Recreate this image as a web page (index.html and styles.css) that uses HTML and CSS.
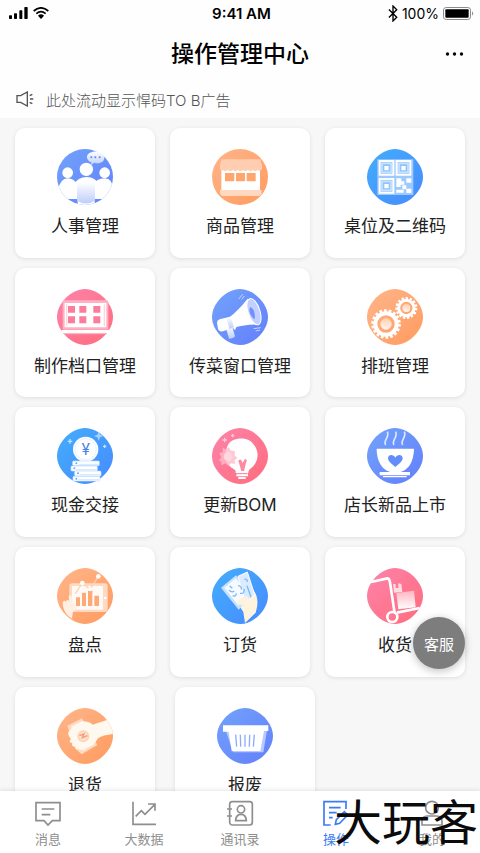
FILE: index.html
```html
<!DOCTYPE html>
<html lang="zh-CN">
<head>
<meta charset="utf-8">
<meta name="viewport" content="width=device-width, initial-scale=1">
<title>操作管理中心</title>
<link rel="stylesheet" href="styles.css">
</head>
<body>
<svg class="defs" aria-hidden="true">
  <defs>
    <linearGradient id="indigo" x1="0" y1="0" x2="1" y2="1"><stop offset="0" stop-color="#72a3fb"/><stop offset="1" stop-color="#637ffc"/></linearGradient>
    <linearGradient id="orange" x1="0" y1="0" x2="1" y2="1"><stop offset="0" stop-color="#ffb58a"/><stop offset="1" stop-color="#ff9b5f"/></linearGradient>
    <linearGradient id="blue" x1="0" y1="0" x2="1" y2="1"><stop offset="0" stop-color="#43adfb"/><stop offset="1" stop-color="#478bff"/></linearGradient>
    <linearGradient id="pink" x1="0" y1="0" x2="1" y2="1"><stop offset="0" stop-color="#fd83ab"/><stop offset="1" stop-color="#ff6c7c"/></linearGradient>
    <linearGradient id="fadeBlue" x1="0" y1="0" x2="0" y2="1"><stop offset="0" stop-color="#fff"/><stop offset="1" stop-color="#bccdfc"/></linearGradient>
    <linearGradient id="fadePink" x1="0" y1="0" x2="0" y2="1"><stop offset="0" stop-color="#ffb5c2"/><stop offset="1" stop-color="#fff"/></linearGradient>
    <linearGradient id="fadeOrange" x1="0" y1="0" x2="0" y2="1"><stop offset="0" stop-color="#ffd0b2"/><stop offset="1" stop-color="#fff5ee"/></linearGradient>
    <path id="blob" d="M84 0C125 0 168 43 168 84S125 168 84 168 0 125 0 84 43 0 84 0Z"/>
    <clipPath id="clip"><use href="#blob"/></clipPath>
    <clipPath id="round"><circle cx="84" cy="84" r="84"/></clipPath>
  </defs>
</svg>

<header class="top">
  <div class="status">
    <div class="status-left">
      <svg class="signal" viewBox="0 0 57 36" aria-hidden="true"><rect x="0" y="25" width="9" height="11" rx="2"/><rect x="15" y="19" width="9" height="17" rx="2"/><rect x="31" y="10" width="9" height="26" rx="2"/><rect x="46" y="0" width="10" height="36" rx="2"/></svg>
      <svg class="wifi" viewBox="0 0 48 36" aria-hidden="true"><path d="M2 12Q24-7 46 12M10 20Q24 8 38 20" fill="none" stroke="#000" stroke-width="5"/><path d="M15 26Q24 18 33 26L24 36Z"/></svg>
    </div>
    <span class="time">9:41 AM</span>
    <div class="status-right">
      <svg class="bluetooth" viewBox="0 0 28 50" aria-hidden="true"><path d="M2 13L25 36 14 47V3L25 14 2 37" fill="none" stroke="#000" stroke-width="4"/></svg>
      <span>100%</span>
      <svg class="battery" viewBox="0 0 93 39" aria-hidden="true"><rect x="1.500" y="1.500" width="81" height="36" rx="8" fill="none" stroke="#8b8b8b" stroke-width="3"/><rect x="7" y="7" width="70" height="25" rx="3"/><path d="M87 13Q94 19 87 26Z" fill="#8b8b8b"/></svg>
    </div>
  </div>
  <div class="title-bar">
    <h1>操作管理中心</h1>
    <button class="more" type="button" aria-label="更多"><svg viewBox="0 0 54 12" aria-hidden="true"><circle cx="6" cy="6" r="5"/><circle cx="27" cy="6" r="5"/><circle cx="48" cy="6" r="5"/></svg></button>
  </div>
  <div class="notice">
    <svg viewBox="0 0 54 48" aria-hidden="true"><path d="M3 14H14L34 3V45L14 34H3ZM41 14L49 10M42 24H52M41 34L49 38" fill="none" stroke="#555" stroke-width="4"/></svg>
    <span>此处流动显示悍码TO B广告</span>
  </div>
</header>

<main class="content">
  <div class="grid">
    <a class="card" href="#"><svg viewBox="0 0 168 168" aria-hidden="true"><circle cx="84" cy="84" r="84" fill="url(#indigo)"/><g clip-path="url(#round)"><path d="M3 122Q11 88 32 88T60 108L66 150H28ZM108 108Q118 88 143 88T167 122L138 150H110Z" fill="#fff"/><circle cx="32" cy="71" r="16" fill="#fff"/><circle cx="143" cy="71" r="16" fill="#fff"/><path d="M50 108Q62 84 89 84T126 108L113 152V168H62V130Z" fill="#fff"/><path d="M60 100H114V155Q88 172 60 155Z" fill="url(#fadeBlue)"/><circle cx="88" cy="61" r="20" fill="#fff"/></g><path d="M90 26C87 2 142 0 142 26 142 42 122 45 112 41L102 49 103 40Q92 36 90 26Z" fill="url(#fadeBlue)"/><g fill="#5c8af5"><circle cx="103" cy="25" r="3"/><circle cx="115" cy="25" r="3"/><circle cx="128" cy="25" r="3"/></g></svg><span>人事管理</span></a>

    <a class="card" href="#"><svg viewBox="0 0 168 168" aria-hidden="true"><circle cx="84" cy="84" r="84" fill="url(#orange)"/><path d="M28 58H144V128H28Z" fill="#fff"/><path d="M29 31H145L150 50V60Q144 69 137 63 130 70 123 63 115 70 108 63 100 70 93 63 85 70 78 63 70 70 63 63 55 70 48 63 40 70 33 63 24 66 24 57V48Z" fill="#ffceb0"/><path d="M39 72H67V97H39ZM72 72H99V97H72ZM104 72H131V97H104Z" fill="#ffa66f"/><path d="M24 123H149V135L142 141H30L24 135Z" fill="#ffd8bf"/></svg><span>商品管理</span></a>

    <a class="card" href="#"><svg viewBox="0 0 168 168" aria-hidden="true"><use href="#blob" fill="url(#blue)"/><path d="M31 31H139V138H31Z" fill="#9bcafe"/><g fill="#8fc3fb" stroke="#fff" stroke-width="6"><path d="M38 36H79V77H38ZM89 36H130V77H89ZM38 90H79V131H38Z"/></g><path d="M45 43H72V70H45ZM96 43H123V70H96ZM45 97H72V124H45Z" fill="none" stroke="#c9e3ff" stroke-width="5"/><path d="M52 51H65V64H52ZM103 51H116V64H103ZM52 105H65V118H52ZM88 88H103V97H112V107H101V114H88ZM118 88H133V101H118ZM106 109H118V119H133V132H118V121H106ZM88 122H110V131H88Z" fill="#fff"/></svg><span>桌位及二维码</span></a>

    <a class="card" href="#"><svg viewBox="0 0 168 168" aria-hidden="true"><use href="#blob" fill="url(#pink)"/><path d="M17 38Q17 34 22 34H149Q154 34 154 39V122H17Z" fill="#ffb1c3"/><path d="M23 42H148V115H23Z" fill="#fff"/><path d="M29 46V112M142 46V112" stroke="#ffd5de" stroke-width="4"/><g fill="#fa7d9c"><path d="M33 51H54V71H33ZM67 51H88V71H67ZM109 51H130V71H109ZM33 82H54V103H33ZM67 82H88V103H67ZM109 82H130V103H109Z"/></g><path d="M14 123H156V132H14Z" fill="#fff"/><path d="M20 132H150V136H20Z" fill="#ffb1c3"/></svg><span>制作档口管理</span></a>

    <a class="card" href="#"><svg viewBox="0 0 168 168" aria-hidden="true"><use href="#blob" fill="url(#indigo)"/><path d="M42 117L60 110 69 142Q64 150 51 149Z" fill="url(#fadeBlue)"/><path d="M15 101Q15 94 23 91L54 83Q77 66 107 29L144 106Q92 107 73 114L69 124 62 116 33 127Q21 129 18 119Z" fill="#fff"/><path d="M44 87L56 83 66 115 52 120Z" fill="url(#fadeBlue)"/><ellipse cx="126" cy="68" rx="18" ry="41" transform="rotate(-18 126 68)" fill="#c1d0ff" stroke="#fff" stroke-width="3"/><path d="M114 54Q129 57 129 91 116 83 112 65Z" fill="#6f91fc"/><path d="M80 30L92 16M89 31L97 21M125 119L146 116M131 126L144 123" stroke="#c6d5ff" stroke-width="3"/></svg><span>传菜窗口管理</span></a>

    <a class="card" href="#"><svg viewBox="0 0 168 168" aria-hidden="true"><use href="#blob" fill="url(#orange)"/><g fill="none" stroke="#fff"><circle cx="57" cy="105" r="32" stroke-width="12"/><circle cx="57" cy="105" r="40" stroke-width="9" stroke-dasharray="8 5.960"/><circle cx="118" cy="57" r="23" stroke-width="9"/><circle cx="118" cy="57" r="29" stroke-width="8" stroke-dasharray="7 5.150"/></g><circle cx="57" cy="105" r="17" fill="url(#fadeOrange)"/><circle cx="118" cy="57" r="12" fill="url(#fadeOrange)"/></svg><span>排班管理</span></a>

    <a class="card" href="#"><svg viewBox="0 0 168 168" aria-hidden="true"><use href="#blob" fill="url(#blue)"/><circle cx="86" cy="64" r="38" fill="#fff"/><circle cx="86" cy="64" r="32" fill="none" stroke="#e5f0ff" stroke-width="3"/><text x="86" y="82" class="coin">¥</text><g fill="#fff" stroke="#c4defd" stroke-width="2"><rect x="47" y="99" width="80" height="14" rx="3"/><rect x="42" y="114" width="79" height="15" rx="3"/><rect x="53" y="129" width="79" height="15" rx="3"/><rect x="48" y="145" width="81" height="14" rx="3"/></g><path d="M65 109H126M58 125H119M68 140H130M64 155H127" stroke="#d3e7ff" stroke-width="3"/><g fill="#68aafa"><circle cx="58" cy="106" r="3"/><circle cx="52" cy="121" r="3"/><circle cx="63" cy="136" r="3"/><circle cx="58" cy="152" r="3"/></g><path d="M126 10L129 20 139 24 129 28 125 38 121 28 111 24 121 20Z" fill="#a7d2ff"/><path d="M39 33V47M32 40H46M143 50V60M138 55H148" stroke="#c4e2ff" stroke-width="4"/></svg><span>现金交接</span></a>

    <a class="card" href="#"><svg viewBox="0 0 168 168" aria-hidden="true"><use href="#blob" fill="url(#pink)"/><path d="M49 49C62 28 107 24 124 48 145 72 139 107 113 124Q106 133 105 142H77Q76 130 64 122C40 110 34 76 49 49Z" fill="#fff"/><path d="M32 59L42 64 50 58 57 68 69 69 68 82 76 90 68 97 69 108 57 106 49 114 40 106 29 112 27 100 20 98 28 87 21 75 32 73Z" fill="#ffbaca" opacity=".8"/><circle cx="48" cy="86" r="13" fill="#ffd7df"/><path d="M88 130L81 104Q75 94 87 95L92 105 98 94Q108 93 102 104L96 130Z" fill="#fd8aa0"/><path d="M71 132H109M73 142H108M79 150H101" stroke="#fff" stroke-width="6"/><path d="M76 137H105" stroke="#fd7995" stroke-width="3"/><path d="M38 29V43M31 36H45M62 18V28M57 23H67" stroke="#ffc8d8" stroke-width="4"/></svg><span>更新BOM</span></a>

    <a class="card" href="#"><svg viewBox="0 0 168 168" aria-hidden="true"><use href="#blob" fill="url(#indigo)"/><path d="M29 62H141C140 107 119 134 85 134S29 106 29 62Z" fill="#fff"/><path d="M85 117C79 112 63 101 63 91 63 79 79 77 85 89 91 77 107 79 107 91 107 101 91 112 85 117Z" fill="#638dfc"/><path d="M38 132H129V142H38ZM48 144H119V148H48Z" fill="#fff"/><path d="M56 51C47 38 69 28 61 11M81 51C72 38 94 28 86 11M107 51C98 38 120 28 112 11" fill="none" stroke="#dce7ff" stroke-width="5"/></svg><span>店长新品上市</span></a>

    <a class="card" href="#"><svg viewBox="0 0 168 168" aria-hidden="true"><use href="#blob" fill="url(#orange)"/><rect x="37" y="46" width="115" height="86" rx="8" fill="#ffdac2"/><rect x="45" y="54" width="93" height="71" fill="#fffaf6"/><circle cx="145" cy="90" r="4" fill="#fff"/><path d="M57 88H69V114H57ZM75 74H87V114H75ZM93 67H106V114H93ZM112 83H126V114H112Z" fill="#ffaa76"/><path d="M55 77L76 45 99 64 124 25" fill="none" stroke="#ffd0b0" stroke-width="4"/><g fill="#fff"><circle cx="76" cy="45" r="7"/><circle cx="99" cy="64" r="6"/><circle cx="124" cy="25" r="7"/></g><g clip-path="url(#clip)"><path d="M48 153C32 146 18 129 17 104Q20 93 27 102L29 96Q36 94 37 103L35 85Q41 77 45 89L48 107 58 113Q65 124 48 130L45 150Z" fill="#fff0e3"/></g></svg><span>盘点</span></a>

    <a class="card" href="#"><svg viewBox="0 0 168 168" aria-hidden="true"><use href="#blob" fill="url(#blue)"/><g clip-path="url(#clip)"><path d="M76 104L94 98 99 44Q111 42 123 65 145 91 131 134L99 165 94 132Z" fill="#fff3de"/><path d="M27 59L72 22 121 80 80 125Z" fill="#c6e2ff"/><path d="M37 59L71 31 111 79 79 112Z" fill="#f6fbff"/><path d="M78 25L106 12 128 80 101 104Z" fill="#d9ebff" stroke="#fff" stroke-width="3"/><g fill="none" stroke="#7fb6f7" stroke-width="4"><path d="M53 54L61 61M51 67Q60 75 67 69M62 83Q73 87 73 76M78 53Q90 54 88 65M84 76Q99 78 96 63M97 34Q106 31 106 42M105 53L117 88"/></g><path d="M79 109Q70 100 81 94L105 83 111 96 92 112Z" fill="#fff3de"/></g></svg><span>订货</span></a>

    <a class="card" href="#"><svg viewBox="0 0 168 168" aria-hidden="true"><use href="#blob" fill="url(#pink)"/><path d="M78 47L86 49V60H94V46L103 48 106 72 81 74Z" fill="#ffdbe2"/><path d="M88 75L141 68 146 118 94 124Z" fill="url(#fadePink)"/><path d="M12 42L61 31Q67 31 69 43L83 136M90 134L158 120" fill="none" stroke="#fff" stroke-width="8"/><circle cx="76" cy="147" r="15" fill="#ff7790" stroke="#fff" stroke-width="8"/></svg><span>收货</span></a>
  </div>

  <div class="last-row">
    <a class="card" href="#"><svg viewBox="0 0 168 168" aria-hidden="true"><use href="#blob" fill="url(#orange)"/><g clip-path="url(#clip)"><path d="M31 53L75 31 121 111 74 139 56 123Z" fill="#ffd9bf"/><path d="M42 55L77 39 111 110 76 129Z" fill="#fff1e7"/><path d="M34 72Q53 48 77 40 95 40 107 50L168 30V78Q138 81 123 91 111 116 83 118 69 132 65 122 54 128 55 116 42 117 46 105 33 104 42 92 32 85 34 72Z" fill="#fff8ee"/><circle cx="79" cy="85" r="18" fill="#ffd3b7"/><circle cx="79" cy="85" r="13" fill="#ffe0cd"/><path d="M67 83L81 78 76 89 91 83" fill="none" stroke="#f49d78" stroke-width="4"/></g></svg><span>退货</span></a>
    <a class="card" href="#"><svg viewBox="0 0 168 168" aria-hidden="true"><use href="#blob" fill="url(#indigo)"/><path d="M24 61H151L139 133H48Z" fill="#b7c9ff"/><path d="M18 52H154V69H141L130 129H44L35 71H18Z" fill="#fff"/><path d="M56 80L59 116M70 80L71 116M84 80V116M98 80L97 116M112 80L109 116" stroke="#8eabff" stroke-width="4"/></svg><span>报废</span></a>
  </div>
</main>

<div class="bottom">
  <button class="service" type="button">客服</button>
  <nav class="tabs">
    <a href="#"><svg viewBox="0 0 78 78" aria-hidden="true"><path d="M3 5H75V59H52L39 72 27 59H3ZM20 24H58M20 41H46"/></svg><span>消息</span></a>
    <a href="#"><svg viewBox="0 0 78 78" aria-hidden="true"><path d="M6 2V70H75M14 46L31 29 42 40 71 11M51 9H72V29"/></svg><span>大数据</span></a>
    <a href="#"><svg viewBox="0 0 78 78" aria-hidden="true"><rect x="8" y="2" width="68" height="70" rx="8"/><path d="M0 24H15M0 45H15M26 59Q27 40 42 40T58 59Z"/><circle cx="42" cy="25" r="11"/></svg><span>通讯录</span></a>
    <a class="active" href="#" aria-current="page"><svg viewBox="0 0 78 78" aria-hidden="true"><path d="M69 24V2H3V72H23M18 20H53M18 35H41M18 50H29M37 70L40 56 64 32 74 42 50 67Z"/></svg><span>操作</span></a>
    <a href="#"><svg viewBox="0 0 78 78" aria-hidden="true"><circle cx="39" cy="20" r="19"/><path d="M9 72V61Q9 45 25 45H53Q69 45 69 61V72Z"/></svg><span>我的</span></a>
  </nav>
  <div class="brand">大玩客</div>
</div>
</body>
</html>
```
FILE: styles.css
```css
* { box-sizing: border-box; }

body {
  margin: 0;
  height: 100vh;
  display: flex;
  flex-direction: column;
  overflow: hidden;
  background: #f7f7f7;
  color: #222;
  font-family: Inter, "Noto Sans CJK SC", sans-serif;
}

a { color: inherit; text-decoration: none; }
button { border: 0; padding: 0; font: inherit; cursor: pointer; }
svg { display: block; flex: none; }
.defs { position: absolute; width: 0; height: 0; }

.top { flex: none; background: #fefefe; color: #000; }

.status {
  display: grid;
  grid-template-columns: 1fr auto 1fr;
  align-items: center;
  height: 26px;
  padding: 0 6px 0 9px;
  font-size: 14px;
}
.status-left, .status-right { display: flex; align-items: center; }
.status-left { gap: 5px; }
.status-right { justify-content: flex-end; gap: 4px; }
.time { font-size: 15px; font-weight: 600; }
.signal { width: 19px; height: 12px; }
.wifi { width: 16px; height: 12px; }
.bluetooth { width: 10px; height: 17px; }
.battery { width: 31px; height: 13px; }

.title-bar {
  display: grid;
  grid-template-columns: 1fr auto 1fr;
  align-items: center;
  height: 56px;
  padding: 0 16px;
}
.title-bar h1 {
  grid-column: 2;
  margin: 0;
  font-size: 23px;
  font-weight: 500;
  line-height: 32px;
}
.more { justify-self: end; padding: 10px 0; background: none; }
.more svg { width: 19px; height: 4px; }

.notice {
  display: flex;
  align-items: center;
  gap: 12px;
  height: 36px;
  padding: 0 16px 2px;
  color: #555;
  font-size: 15px;
  font-weight: 300;
}
.notice svg { width: 18px; height: 16px; }

.content {
  flex: 1;
  min-height: 0;
  padding: 10px 15px;
  overflow-y: auto;
  scrollbar-width: none;
}
.grid {
  display: grid;
  grid-template-columns: repeat(3, 1fr);
  gap: 10px 15px;
}
.last-row { display: flex; gap: 20px; margin-top: 10px; }
.last-row .card { width: calc((100% - 30px) / 3); }

.card {
  display: flex;
  flex-direction: column;
  align-items: center;
  gap: 8px;
  aspect-ratio: 27 / 25;
  padding-top: 21px;
  border-radius: 10px;
  background: #fff;
  box-shadow: 0 1px 4px rgba(0, 0, 0, 0.1);
  font-size: 17px;
  line-height: 26px;
  white-space: nowrap;
}
.card svg { width: 56px; height: 56px; }
.coin {
  fill: #4a83e8;
  font-size: 46px;
  font-weight: 400;
  text-anchor: middle;
}

.bottom { position: relative; flex: none; }
.tabs {
  display: grid;
  grid-template-columns: repeat(5, 1fr);
  height: 62px;
  padding-top: 10px;
  background: #fff;
  box-shadow: 0 -1px 4px rgba(0, 0, 0, 0.1);
  color: #8e8e8e;
  font-size: 13px;
  line-height: 18px;
}
.tabs a { display: flex; flex-direction: column; align-items: center; gap: 3px; }
.tabs svg {
  width: 26px;
  height: 26px;
  overflow: visible;
  fill: none;
  stroke: currentColor;
  stroke-width: 5;
}
.tabs .active { color: #3b7cf5; }

.service {
  position: absolute;
  right: 15px;
  bottom: 184px;
  width: 52px;
  height: 52px;
  border-radius: 50%;
  background: #7d7d7d;
  box-shadow: 0 2px 8px rgba(0, 0, 0, 0.25);
  color: #fff;
  font-size: 15px;
}

.brand {
  position: absolute;
  right: 2px;
  bottom: 6px;
  color: #0b0b0b;
  font-size: 48px;
  line-height: 48px;
  pointer-events: none;
}
```
